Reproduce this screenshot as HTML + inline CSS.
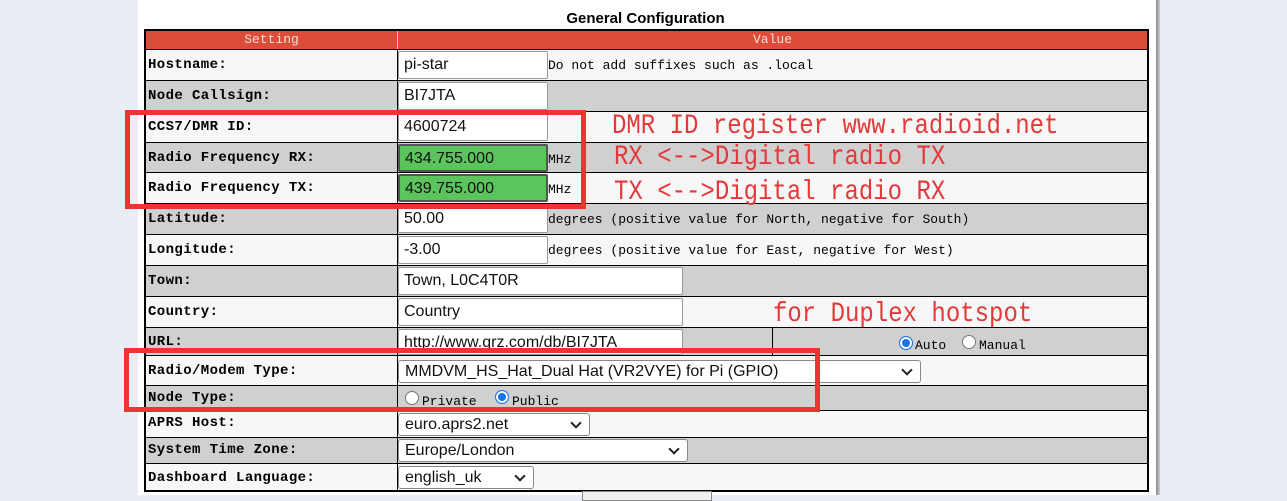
<!DOCTYPE html>
<html><head><meta charset="utf-8"><style>
*{margin:0;padding:0;box-sizing:border-box}
body{width:1287px;height:495px;background:#e9edf5;position:relative;overflow:hidden;font-family:"Liberation Sans",sans-serif}
.panel{position:absolute;left:138px;top:0;width:1018px;height:495px;background:#fff}
.shadow{position:absolute;left:1156px;top:0;width:4px;height:495px;background:linear-gradient(to right,#888,#ccc)}
.title{position:absolute;left:0;width:1287px;top:10px;text-align:center;font-weight:bold;font-size:15px;color:#000;padding-left:4px}
.tbl{position:absolute;left:144px;top:29px;width:1005px;height:463px;border:2px solid #000;background:#000}
.row{position:absolute;left:0;width:1001px}
.l{position:absolute;left:0;width:251px;height:100%;}
.v{position:absolute;left:252px;right:0;height:100%;}
.w{background:#f7f7f7}.g{background:#d0d0d0}
.lab{position:absolute;left:2px;font-family:"Liberation Mono",monospace;font-weight:bold;font-size:14px;letter-spacing:0.4px;color:#000}
.inp{position:absolute;background:#fff;border:1px solid #999;border-radius:2px;font-size:16px;color:#111;padding-left:5px;line-height:26px;height:28px;white-space:nowrap;overflow:hidden}
.grn{background:#5cc45c;border:2px solid #555}
.note{position:absolute;font-family:"Liberation Mono",monospace;font-size:13px;color:#000;white-space:nowrap}
.sel{position:absolute;background:#fff;border:1px solid #888;border-radius:3px;font-size:16px;color:#111;padding-left:6px;height:23px;line-height:21px;white-space:nowrap}
.sel:after{content:"";position:absolute;right:9px;top:5px;width:6px;height:6px;border-right:2px solid #222;border-bottom:2px solid #222;transform:rotate(45deg)}
.red{position:absolute;font-family:"Liberation Mono",monospace;font-size:24px;color:#e23a3a;white-space:nowrap;transform:scaleY(1.15);transform-origin:left top}
.box{position:absolute;border:5px solid #ee3333}
.rad{position:absolute;width:14px;height:14px;border-radius:50%;border:1px solid #777;background:#fff}
.rad.on{border:1px solid #1a73e8;box-shadow:inset 0 0 0 2px #fff;background:#1a73e8}
</style></head><body>
<div class="panel"></div><div class="shadow"></div>
<div class="title">General Configuration</div>
<div class="tbl">
 <div class="row" style="top:0;height:18px;background:#dd4b39">
  <div style="position:absolute;left:0;width:251px;text-align:center;color:#f4e0d8;font-family:'Liberation Mono',monospace;font-size:13px;line-height:18px">Setting</div>
  <div style="position:absolute;left:251px;width:1px;height:18px;background:#f0c0b0"></div>
  <div style="position:absolute;left:252px;right:0;text-align:center;color:#f4e0d8;font-family:'Liberation Mono',monospace;font-size:13px;line-height:18px">Value</div>
 </div>
 <div class="row" style="top:19px;height:30px"><div class="l w"><span class="lab" style="top:7px">Hostname:</span></div><div class="v w"><div class="inp" style="left:0;top:1px;width:150px">pi-star</div><span class="note" style="left:150px;top:8px">Do not add suffixes such as .local</span></div></div>
 <div class="row" style="top:50px;height:30px"><div class="l g"><span class="lab" style="top:7px">Node Callsign:</span></div><div class="v g"><div class="inp" style="left:0;top:1px;width:150px">BI7JTA</div></div></div>
 <div class="row" style="top:81px;height:30px"><div class="l w"><span class="lab" style="top:7px">CCS7/DMR ID:</span></div><div class="v w"><div class="inp" style="left:0;top:1px;width:150px">4600724</div></div></div>
 <div class="row" style="top:112px;height:29px"><div class="l g"><span class="lab" style="top:7px">Radio Frequency RX:</span></div><div class="v g"><div class="inp grn" style="left:0;top:1px;width:150px">434.755.000</div><span class="note" style="left:150px;top:9px">MHz</span></div></div>
 <div class="row" style="top:142px;height:30px"><div class="l w"><span class="lab" style="top:7px">Radio Frequency TX:</span></div><div class="v w"><div class="inp grn" style="left:0;top:1px;width:150px">439.755.000</div><span class="note" style="left:150px;top:9px">MHz</span></div></div>
 <div class="row" style="top:173px;height:30px"><div class="l g"><span class="lab" style="top:7px">Latitude:</span></div><div class="v g"><div class="inp" style="left:0;top:1px;width:150px">50.00</div><span class="note" style="left:150px;top:8px">degrees (positive value for North, negative for South)</span></div></div>
 <div class="row" style="top:204px;height:30px"><div class="l w"><span class="lab" style="top:7px">Longitude:</span></div><div class="v w"><div class="inp" style="left:0;top:1px;width:150px">-3.00</div><span class="note" style="left:150px;top:8px">degrees (positive value for East, negative for West)</span></div></div>
 <div class="row" style="top:235px;height:30px"><div class="l g"><span class="lab" style="top:7px">Town:</span></div><div class="v g"><div class="inp" style="left:0;top:1px;width:285px">Town, L0C4T0R</div></div></div>
 <div class="row" style="top:266px;height:30px"><div class="l w"><span class="lab" style="top:7px">Country:</span></div><div class="v w"><div class="inp" style="left:0;top:1px;width:285px">Country</div></div></div>
 <div class="row" style="top:297px;height:27px"><div class="l g"><span class="lab" style="top:6px">URL:</span></div><div class="v g" style="width:374px"><div class="inp" style="left:0;top:1px;width:285px;height:26px">http://www.qrz.com/db/BI7JTA</div></div>
  <div class="v g" style="left:627px"><div class="rad on" style="left:126px;top:8px"></div><span class="note" style="left:142px;top:10px">Auto</span><div class="rad" style="left:189px;top:7px"></div><span class="note" style="left:206px;top:10px">Manual</span></div></div>
 <div class="row" style="top:325px;height:29px"><div class="l w"><span class="lab" style="top:7px">Radio/Modem Type:</span></div><div class="v w"><div class="sel" style="left:0;top:4px;width:523px">MMDVM_HS_Hat_Dual Hat (VR2VYE) for Pi (GPIO)</div></div></div>
 <div class="row" style="top:355px;height:24px"><div class="l g"><span class="lab" style="top:4px">Node Type:</span></div><div class="v g"><div class="rad" style="left:7px;top:5px"></div><span class="note" style="left:24px;top:8px">Private</span><div class="rad on" style="left:97px;top:4px"></div><span class="note" style="left:114px;top:8px">Public</span></div></div>
 <div class="row" style="top:380px;height:26px"><div class="l w"><span class="lab" style="top:4px">APRS Host:</span></div><div class="v w"><div class="sel" style="left:0;top:2px;width:192px">euro.aprs2.net</div></div></div>
 <div class="row" style="top:407px;height:25px"><div class="l g"><span class="lab" style="top:4px">System Time Zone:</span></div><div class="v g"><div class="sel" style="left:0;top:1px;width:290px">Europe/London</div></div></div>
 <div class="row" style="top:433px;height:26px"><div class="l w"><span class="lab" style="top:6px">Dashboard Language:</span></div><div class="v w"><div class="sel" style="left:0;top:2px;width:136px">english_uk</div></div></div>
</div>
<div style="position:absolute;left:582px;top:491px;width:130px;height:10px;border:1px solid #888;background:#f0f0f0"></div>
<div class="red" style="left:612px;top:111px">DMR ID register www.radioid.net</div>
<div class="red" style="left:614px;top:142px">RX &lt;--&gt;Digital radio TX</div>
<div class="red" style="left:614px;top:177px">TX &lt;--&gt;Digital radio RX</div>
<div class="red" style="left:773px;top:299px">for Duplex hotspot</div>
<div class="box" style="left:125px;top:110px;width:461px;height:99px"></div>
<div class="box" style="left:124px;top:348px;width:696px;height:64px"></div>
</body></html>
